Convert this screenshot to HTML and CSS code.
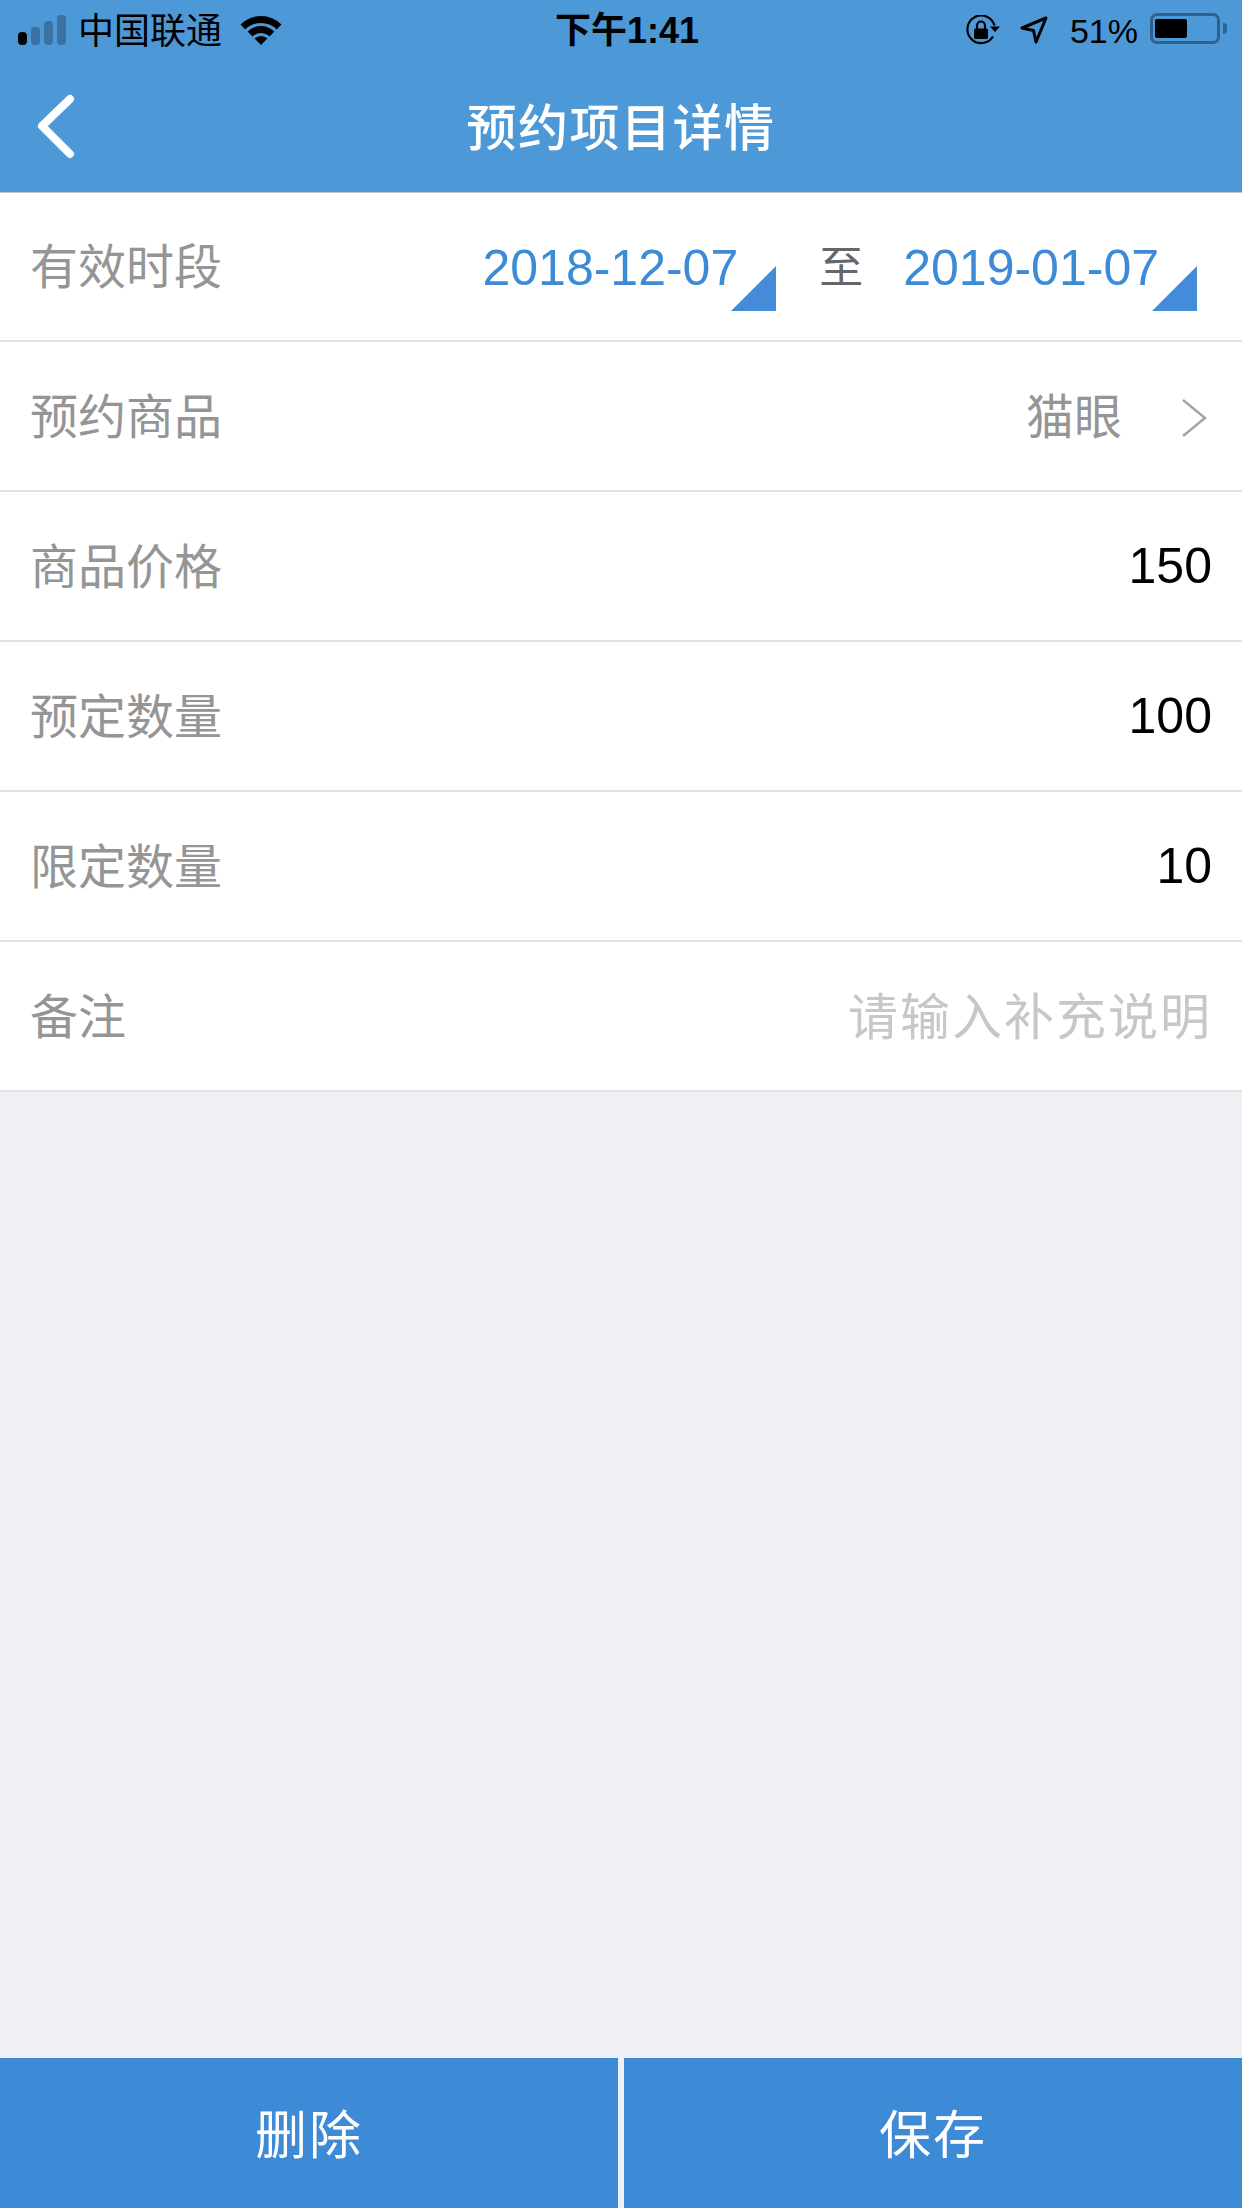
FILE: index.html
```html
<!DOCTYPE html>
<html lang="zh-CN">
<head>
<meta charset="UTF-8">
<meta name="viewport" content="width=device-width, initial-scale=1.0">
<title>预约项目详情</title>
<link rel="stylesheet" href="styles.css">
</head>
<body>

<div class="page">
  <div class="top">
    <div class="status">
      <div class="status-left">
        <div class="signal">
          <i class="on h1"></i><i class="h2"></i><i class="h3"></i><i class="h4"></i>
        </div>
        <span class="carrier">中国联通</span>
        <svg class="wifi" width="42" height="30" viewBox="0 0 42 30">
          <path d="M0.500 9.500A29 29 0 0 1 41.500 9.500L36.600 14.400A22 22 0 0 0 5.400 14.400Z"/>
          <path d="M7.600 16.600A19 19 0 0 1 34.400 16.600L29.500 21.500A12 12 0 0 0 12.500 21.500Z"/>
          <path d="M14.600 23.600A9 9 0 0 1 27.400 23.600L21 30Z"/>
        </svg>
      </div>
      <div class="clock">下午1:41</div>
      <div class="status-right">
        <svg class="lock" width="34" height="30" viewBox="0 0 34 30">
          <path d="M27 21.500A13.800 13.800 0 1 1 28.500 10.500" fill="none" stroke="#000" stroke-width="2.200"/>
          <path d="M24 11.500H34L29 17Z"/>
          <rect x="8" y="13.500" width="14" height="10.500" rx="1.500"/>
          <path d="M11 14V10.500A4 4 0 0 1 19 10.500V14" fill="none" stroke="#000" stroke-width="2.200"/>
        </svg>
        <svg class="arrow" width="28" height="28" viewBox="0 0 28 28">
          <path d="M2 12L26 2L16 26L13.500 14.500Z" fill="none" stroke="#000" stroke-width="3" stroke-linejoin="round"/>
        </svg>
        <span class="percent">51%</span>
        <div class="battery"><div class="battery-fill"></div></div>
        <div class="battery-tip"></div>
      </div>
    </div>
    <div class="nav">
      <svg class="back" width="44" height="70" viewBox="0 0 44 70">
        <path d="M34 5L6 32L34 60" fill="none" stroke="#fff" stroke-width="8" stroke-linecap="round" stroke-linejoin="round"/>
      </svg>
      <div class="nav-title">预约项目详情</div>
    </div>
  </div>

  <div class="form">
    <div class="row">
      <span class="label">有效时段</span>
      <div class="dates">
        <div class="date">2018-12-07<i class="corner"></i></div>
        <span class="to">至</span>
        <div class="date">2019-01-07<i class="corner"></i></div>
      </div>
    </div>
    <div class="row">
      <span class="label">预约商品</span>
      <div class="pick">
        <span class="pick-text">猫眼</span>
        <svg class="more" width="28" height="40" viewBox="0 0 28 40">
          <path d="M3 2L25 20L3 38" fill="none" stroke="#a5a5a5" stroke-width="2.500"/>
        </svg>
      </div>
    </div>
    <div class="row">
      <span class="label">商品价格</span>
      <span class="value">150</span>
    </div>
    <div class="row">
      <span class="label">预定数量</span>
      <span class="value">100</span>
    </div>
    <div class="row">
      <span class="label">限定数量</span>
      <span class="value">10</span>
    </div>
    <div class="row">
      <span class="label">备注</span>
      <span class="hint">请输入补充说明</span>
    </div>
  </div>

  <div class="actions">
    <div class="btn">删除</div>
    <div class="btn">保存</div>
  </div>
</div>

</body>
</html>
```

FILE: styles.css
```css
html, body {
  margin: 0;
  padding: 0;
}
body {
  font-family: 'Liberation Sans', 'Noto Sans CJK SC', sans-serif;
  background: #eff0f4;
  width: 1242px;
  height: 2208px;
  overflow: hidden;
}
.page {
  display: flex;
  flex-direction: column;
  height: 2208px;
}

/* top bar */
.top {
  background: #4d98d6;
  height: 192px;
  flex-shrink: 0;
  box-shadow: 0 1px 0 #c4c4c4;
  position: relative;
}
.status {
  height: 60px;
  display: flex;
  justify-content: space-between;
  align-items: center;
  padding: 0 15px 0 18px;
  position: relative;
  color: #000;
}
.status svg {
  display: block;
}
.status-left, .status-right {
  display: flex;
  align-items: center;
}
.signal {
  display: flex;
  align-items: flex-end;
  gap: 4px;
  height: 30px;
}
.signal i {
  width: 9px;
  border-radius: 4px;
  background: #3a72a3;
}
.signal .on { background: #000; }
.signal .h1 { height: 13px; }
.signal .h2 { height: 18px; }
.signal .h3 { height: 24px; }
.signal .h4 { height: 30px; }
.carrier {
  font-size: 36px;
  line-height: 40px;
  margin: 3px 0 0 12px;
}
.wifi {
  margin-left: 18px;
}
.clock {
  position: absolute;
  left: 12px;
  right: 0;
  text-align: center;
  font-size: 36px;
  font-weight: bold;
  line-height: 40px;
  margin-top: 2px;
}
.lock { margin-right: 20px; }
.arrow { margin-right: 22px; }
.percent {
  font-size: 34px;
  line-height: 40px;
  margin: 1px 12px 0 0;
}
.battery {
  width: 70px;
  height: 31px;
  box-sizing: border-box;
  border: 3px solid #2f618c;
  border-radius: 7px;
  padding: 3px 2px;
  margin-bottom: 3px;
}
.battery-fill {
  width: 32px;
  height: 100%;
  background: #000;
  border-radius: 2px;
}
.battery-tip {
  width: 4px;
  height: 11px;
  margin: 0 0 3px 3px;
  background: #2f618c;
  border-radius: 0 4px 4px 0;
}

.nav {
  height: 132px;
  display: flex;
  align-items: center;
  justify-content: center;
  position: relative;
}
.back {
  position: absolute;
  left: 36px;
  top: 34px;
}
.nav-title {
  color: #fff;
  font-size: 50px;
  font-weight: 500;
  letter-spacing: 1.5px;
  padding-bottom: 4px;
}

/* form rows */
.form {
  background: #fff;
}
.row {
  box-sizing: border-box;
  height: 150px;
  border-bottom: 2px solid #e1e1e1;
  padding: 0 30px;
  display: flex;
  align-items: center;
  justify-content: space-between;
}
.label {
  color: #959595;
  font-size: 48px;
  padding-bottom: 6px;
}
.dates {
  display: flex;
  align-items: center;
  margin: 3px 15px 0 0;
}
.date {
  color: #3d8bd6;
  font-size: 50px;
  position: relative;
  padding-right: 38px;
}
.corner {
  position: absolute;
  right: 0;
  bottom: -14px;
  width: 0;
  height: 0;
  border-left: 45px solid transparent;
  border-bottom: 45px solid #448cd9;
}
.to {
  color: #666;
  font-size: 44px;
  margin: 0 40px 0 43px;
  padding-bottom: 7px;
}
.pick {
  display: flex;
  align-items: center;
}
.pick-text {
  color: #959595;
  font-size: 48px;
  padding-bottom: 6px;
}
.more {
  margin: 4px 4px 0 58px;
  display: block;
}
.value {
  color: #000;
  font-size: 50px;
}
.hint {
  color: #c7c7c7;
  font-size: 50px;
  letter-spacing: 2px;
  padding-bottom: 6px;
}

/* bottom buttons */
.actions {
  margin-top: auto;
  display: flex;
  gap: 6px;
  height: 150px;
}
.btn {
  flex: 1;
  background: #3d8bd6;
  color: #fff;
  font-size: 52px;
  display: flex;
  align-items: center;
  justify-content: center;
  letter-spacing: 2px;
  padding-bottom: 4px;
}
```
